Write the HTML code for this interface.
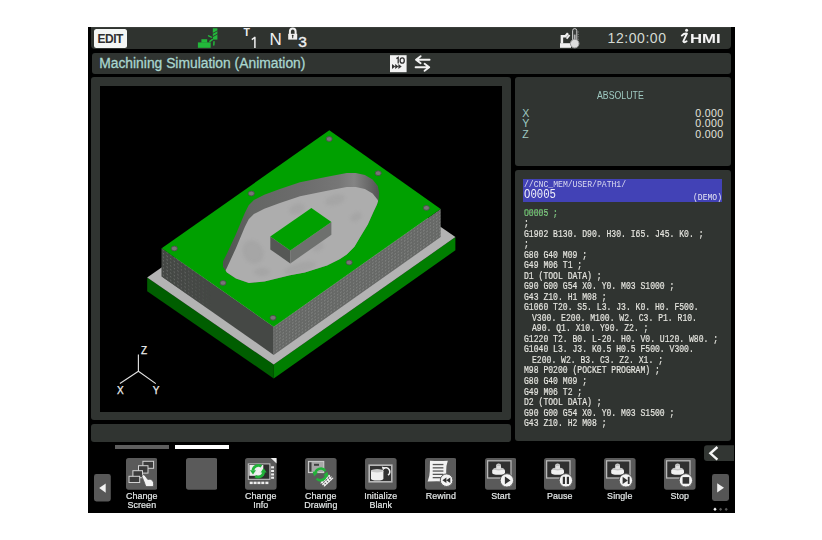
<!DOCTYPE html>
<html><head><meta charset="utf-8">
<style>
*{margin:0;padding:0;box-sizing:border-box}
html,body{width:822px;height:540px;background:#fff;overflow:hidden;font-family:"Liberation Sans",sans-serif}
.a{position:absolute}
#scr{left:88px;top:27px;width:647px;height:486px;background:#000}
.pnl{background:#303431;border-radius:3px}
.lbl{font-size:9.4px;line-height:9px;color:#e4e8e8;text-align:center;letter-spacing:0.1px;transform:scaleX(0.95);transform-origin:50% 0;-webkit-text-stroke:0.2px #e4e8e8}
.mono{font-family:"Liberation Mono",monospace}
</style></head><body>
<div class="a" id="scr"></div>
<!-- header -->
<div class="a pnl" style="left:91px;top:27px;width:640px;height:22.4px;border-radius:0 0 4px 4px;background:#2f332f;border-top:1px solid #3a3e3a"></div>
<div class="a" style="left:94.2px;top:28.5px;width:32.6px;height:19.4px;background:#f4f6f4;border-radius:2.5px"></div>
<div class="a" style="left:97.6px;top:31.8px;font-size:12px;font-weight:bold;color:#303030;letter-spacing:-0.5px;line-height:14px">EDIT</div>


<!-- green tool icon -->
<svg class="a" style="left:196px;top:27px" width="24" height="22" viewBox="196 27 24 22">
<rect x="197.9" y="42.4" width="12.8" height="5.4" fill="#22b83a"/>
<rect x="201.4" y="39.2" width="5.8" height="3.4" fill="#22b83a"/>
<rect x="212.8" y="28.3" width="4.6" height="11.3" fill="#22b83a"/>
<path d="M212.5 33.5 L217.8 30.6 M212.5 36.8 L217.8 33.9" stroke="#303431" stroke-width="0.9"/>
<path d="M208.6 35.9 L211.3 37.1 M209.9 41.4 L212.3 39.7 M214 41.8 L213.8 45" stroke="#22b83a" stroke-width="1.5" stroke-linecap="round"/>
</svg>
<div class="a" style="left:243.6px;top:27.2px;font-size:10.5px;font-weight:bold;color:#f0f0f0;line-height:11px">T</div>
<svg class="a" style="left:250px;top:36px" width="8" height="13" viewBox="250 36 8 13"><path d="M251.8 39.6 L254.9 37.4 V47.9" fill="none" stroke="#f0f0f0" stroke-width="1.5" stroke-linejoin="round"/></svg>
<div class="a" style="left:269.4px;top:30.6px;font-size:17px;color:#f0f0f0;line-height:18px">N</div>
<svg class="a" style="left:287px;top:27px" width="12" height="14" viewBox="287 27 12 14">
<path d="M289.9 34 V31.4 A2.85 2.85 0 0 1 295.6 31.4 V34" fill="none" stroke="#f0f0f0" stroke-width="2"/>
<rect x="288.2" y="33.8" width="9" height="5.8" fill="#f0f0f0"/>
<circle cx="292.7" cy="35.6" r="0.9" fill="#303431"/><rect x="292.2" y="35.6" width="1" height="2.6" fill="#303431"/>
</svg>
<div class="a" style="left:298.2px;top:33.1px;font-size:15.5px;color:#f0f0f0;line-height:17px;-webkit-text-stroke:0.4px #f0f0f0">3</div>
<!-- robot thermometer -->
<svg class="a" style="left:558px;top:27px" width="24" height="22" viewBox="558 27 24 22">
<path d="M561.9 43.6 V36.2 H565.4 L568 33.2" fill="none" stroke="#f0f0f0" stroke-width="2.5" stroke-linejoin="miter"/>
<path d="M566.6 38.6 L569.6 35" stroke="#f0f0f0" stroke-width="1.9"/>
<rect x="560" y="43.2" width="11" height="4.6" fill="#f0f0f0"/>
<rect x="572.6" y="28.6" width="4.2" height="13.6" rx="2.1" fill="#3a3d3b" stroke="#cfcfcf" stroke-width="1"/>
<rect x="573.8" y="34.6" width="1.8" height="7" fill="#b3b3b3"/>
<circle cx="574.7" cy="43.6" r="4.3" fill="#dedede" stroke="#9a9a9a" stroke-width="1"/>
<path d="M577.6 32 H578.8 M577.6 34.4 H578.8 M577.6 36.8 H578.8 M577.6 39.2 H578.8" stroke="#9a9a9a" stroke-width="0.8"/>
</svg>
<div class="a" style="left:607.6px;top:29.6px;font-size:14px;color:#d4dbd4;letter-spacing:0.55px;line-height:16px">12:00:00</div>
<svg class="a" style="left:678px;top:27px" width="14" height="20" viewBox="678 27 14 20">
<circle cx="686.6" cy="30.2" r="1.5" fill="#f4f4f4"/>
<path d="M681.8 35.6 Q684 33.2 686.9 33.6 L683.3 41.4 Q684 43.2 686.6 41.3" fill="none" stroke="#f4f4f4" stroke-width="1.9" stroke-linejoin="round" stroke-linecap="round"/>
</svg>
<div class="a" style="left:689.6px;top:32.3px;font-size:12.2px;font-weight:bold;color:#f4f4f4;line-height:14px;transform:scaleX(1.37);transform-origin:0 0">HMI</div>


<!-- title bar -->
<div class="a pnl" style="left:92px;top:53px;width:639px;height:20.7px"></div>
<div class="a" style="left:99.2px;top:54.6px;font-size:13.85px;color:#a9d6cf;line-height:16px;-webkit-text-stroke:0.3px #a9d6cf">Machining Simulation (Animation)</div>
<!-- title icons -->
<svg class="a" style="left:388px;top:53px" width="46" height="21" viewBox="388 53 46 21">
<rect x="390" y="55.2" width="16.6" height="17" fill="#f2f2f2"/>
<path d="M396.4 58.6 L398.2 57.4 V63.6" fill="none" stroke="#333" stroke-width="1.3"/><ellipse cx="402.2" cy="60.5" rx="2.1" ry="2.7" fill="none" stroke="#333" stroke-width="1.3"/>
<path d="M392 64 L395.3 66.5 L392 69 Z M395.2 64 L398.5 66.5 L395.2 69 Z M398.4 64 L401.7 66.5 L398.4 69 Z" fill="#333"/>
<path d="M416.5 59.7 H429.6 M420.6 56.2 L416 59.7 L420.6 63.2" fill="none" stroke="#f2f2f2" stroke-width="1.9" stroke-linecap="round" stroke-linejoin="round"/>
<path d="M415.6 67.3 H428.8 M424.6 63.8 L429.2 67.3 L424.6 70.8" fill="none" stroke="#f2f2f2" stroke-width="1.9" stroke-linecap="round" stroke-linejoin="round"/>
</svg>

<!-- graphics panel -->
<div class="a pnl" style="left:91px;top:77px;width:420px;height:343px"></div>
<div class="a" style="left:100px;top:86px;width:402px;height:326px;background:#000"></div>

<svg class="a" style="left:100px;top:86px" width="402" height="326" viewBox="100 86 402 326">
<defs>
<clipPath id="pk"><polygon points="235.9,234.3 244.8,213.0 248.7,205.2 253.9,200.0 264.3,194.8 279.9,189.0 300.0,182.3 325.9,176.9 346.7,173.0 355.8,173.0 364.9,174.9 372.6,179.5 377.8,186.0 379.1,192.4 378.6,199.4 377.0,204.4 373.3,212.2 367.8,224.4 361.1,235.6 354.4,246.7 346.7,254.4 340.0,258.9 327.0,265.4 304.8,272.4 290.0,275.3 264.5,281.6 248.9,282.9 235.9,278.4 226.9,272.5 223.0,266.7 223.0,261.5 226.9,253.7"/></clipPath>
<pattern id="dotR" width="3.2" height="3.2" patternUnits="userSpaceOnUse" patternTransform="skewY(-35.2)"><rect width="3.2" height="3.2" fill="#666866"/><rect x="1" y="1" width="1.1" height="1.1" fill="#8e908e"/></pattern>
<pattern id="dotL" width="3.6" height="3.6" patternUnits="userSpaceOnUse" patternTransform="skewY(35.2)"><rect width="3.6" height="3.6" fill="#454845"/><rect x="1" y="1" width="1.1" height="1.1" fill="#7a7c7a"/></pattern>
<linearGradient id="wall" x1="0" y1="0" x2="1" y2="0"><stop offset="0" stop-color="#505250"/><stop offset="0.18" stop-color="#646664"/><stop offset="0.5" stop-color="#6c6c6c"/><stop offset="0.74" stop-color="#767676"/><stop offset="0.84" stop-color="#848484"/><stop offset="0.93" stop-color="#6a6a6a"/><stop offset="1" stop-color="#545454"/></linearGradient>
<linearGradient id="fg" x1="161" y1="0" x2="274" y2="0" gradientUnits="userSpaceOnUse"><stop offset="0" stop-color="#fff"/><stop offset="0.2" stop-color="#fff" stop-opacity="0.7"/><stop offset="0.45" stop-color="#fff" stop-opacity="0"/></linearGradient><mask id="fadeL"><rect x="100" y="86" width="402" height="326" fill="url(#fg)"/></mask>
<filter id="bl" x="-50%" y="-50%" width="200%" height="200%"><feGaussianBlur stdDeviation="1.5"/></filter>
</defs>
<!-- base -->
<polygon points="147.2,277.6 273.7,364.6 273.7,378.4 147.2,291.2" fill="#005e00"/>
<polygon points="273.7,364.6 455.4,237.1 455.4,250.3 273.7,378.4" fill="#007e00"/>
<polygon points="147.2,277.6 328.9,150.1 455.4,237.1 273.7,364.6" fill="#b3b3b3"/>
<!-- block sides -->
<polygon points="161.7,248.3 273.7,326.7 273.7,354.9 161.7,276.5" fill="#454845"/><polygon points="161.7,248.3 273.7,326.7 273.7,354.9 161.7,276.5" fill="url(#dotL)" mask="url(#fadeL)"/>
<polygon points="273.7,326.7 440.7,208.9 440.7,237.1 273.7,354.9" fill="url(#dotR)"/>
<!-- block top -->
<polygon points="161.7,248.3 329.3,130.3 440.7,208.9 273.7,326.7" fill="#00a000"/>
<!-- pocket -->
<polygon points="235.9,234.3 244.8,213.0 248.7,205.2 253.9,200.0 264.3,194.8 279.9,189.0 300.0,182.3 325.9,176.9 346.7,173.0 355.8,173.0 364.9,174.9 372.6,179.5 377.8,186.0 379.1,192.4 378.6,199.4 377.0,204.4 373.3,212.2 367.8,224.4 361.1,235.6 354.4,246.7 346.7,254.4 340.0,258.9 327.0,265.4 304.8,272.4 290.0,275.3 264.5,281.6 248.9,282.9 235.9,278.4 226.9,272.5 223.0,266.7 223.0,261.5 226.9,253.7" fill="url(#wall)"/>
<g clip-path="url(#pk)">
<polygon points="235.9,248.3 244.8,227.0 248.7,219.2 253.9,214.0 264.3,208.8 279.9,203.0 300.0,196.3 325.9,190.9 346.7,187.0 355.8,187.0 364.9,188.9 372.6,193.5 377.8,200.0 379.1,206.4 378.6,213.4 377.0,218.4 373.3,226.2 367.8,238.4 361.1,249.6 354.4,260.7 346.7,268.4 340.0,272.9 327.0,279.4 304.8,286.4 290.0,289.3 264.5,295.6 248.9,296.9 235.9,292.4 226.9,286.5 223.0,280.7 223.0,275.5 226.9,267.7" fill="#adadad"/>
<ellipse cx="253" cy="252" rx="10" ry="12" transform="rotate(-30 253 252)" fill="#9a9a9a" opacity="0.35" filter="url(#bl)"/><ellipse cx="297" cy="209" rx="8" ry="5" transform="rotate(-20 297 209)" fill="#9a9a9a" opacity="0.35" filter="url(#bl)"/><ellipse cx="335" cy="200" rx="10" ry="5" transform="rotate(-15 335 200)" fill="#9a9a9a" opacity="0.35" filter="url(#bl)"/><ellipse cx="356" cy="217" rx="6" ry="4" transform="rotate(-30 356 217)" fill="#9a9a9a" opacity="0.35" filter="url(#bl)"/><ellipse cx="300" cy="268" rx="16" ry="5" transform="rotate(-15 300 268)" fill="#9a9a9a" opacity="0.35" filter="url(#bl)"/><ellipse cx="262" cy="272" rx="8" ry="4" transform="rotate(0 262 272)" fill="#9a9a9a" opacity="0.35" filter="url(#bl)"/><ellipse cx="318" cy="247" rx="6" ry="4" transform="rotate(-30 318 247)" fill="#9a9a9a" opacity="0.35" filter="url(#bl)"/></g>
<!-- island -->
<polygon points="270.3,236.6 290.3,250.6 290.3,263.4 270.3,249.4" fill="#555755"/>
<polygon points="290.3,250.6 331.4,222.0 331.4,234.8 290.3,263.4" fill="#6e706e"/>
<polygon points="270.3,236.6 311.4,208.0 331.4,222.0 290.3,250.6" fill="#00a000"/>
<!-- holes -->
<ellipse cx="329.2" cy="139" rx="3" ry="2.4" fill="#767676" stroke="#4a4a4a" stroke-width="0.8"/><ellipse cx="251.3" cy="193.5" rx="3" ry="2.4" fill="#767676" stroke="#4a4a4a" stroke-width="0.8"/><ellipse cx="378.2" cy="173.2" rx="3" ry="2.4" fill="#767676" stroke="#4a4a4a" stroke-width="0.8"/><ellipse cx="426.4" cy="207.9" rx="3" ry="2.4" fill="#767676" stroke="#4a4a4a" stroke-width="0.8"/><ellipse cx="174.3" cy="248.5" rx="3" ry="2.4" fill="#767676" stroke="#4a4a4a" stroke-width="0.8"/><ellipse cx="349.2" cy="262.5" rx="3" ry="2.4" fill="#767676" stroke="#4a4a4a" stroke-width="0.8"/><ellipse cx="223" cy="282.9" rx="3" ry="2.4" fill="#767676" stroke="#4a4a4a" stroke-width="0.8"/><ellipse cx="273" cy="317.8" rx="3" ry="2.4" fill="#767676" stroke="#4a4a4a" stroke-width="0.8"/>
<!-- axes -->
<path d="M138.4 371.3 V354.4 M138.4 371.3 L119.9 383.6 M138.4 371.3 L155.8 383.6" stroke="#e0e0e0" stroke-width="1.15" fill="none"/>
<text x="141" y="353.5" font-family="Liberation Sans" font-size="10" fill="#f0f0f0" stroke="#f0f0f0" stroke-width="0.25">Z</text>
<text x="117" y="394" font-family="Liberation Sans" font-size="10" fill="#f0f0f0" stroke="#f0f0f0" stroke-width="0.25">X</text>
<text x="152.8" y="394" font-family="Liberation Sans" font-size="10" fill="#f0f0f0" stroke="#f0f0f0" stroke-width="0.25">Y</text>
</svg>

<!-- scroll bar panel -->
<div class="a pnl" style="left:91px;top:424px;width:420px;height:18px"></div>
<div class="a" style="left:114.7px;top:445.3px;width:54.5px;height:4.1px;background:#5e5e5e"></div>
<div class="a" style="left:174.5px;top:445.3px;width:54.5px;height:4.1px;background:#fff"></div>

<!-- absolute panel -->
<div class="a pnl" style="left:515px;top:77px;width:216px;height:89px"></div>
<!-- program panel -->
<div class="a pnl" style="left:515px;top:170px;width:216px;height:271px"></div>
<div class="a" style="left:523.4px;top:178.8px;width:198.7px;height:23.2px;background:#4242b6"></div>


<!-- soft keys -->
<svg class="a" style="left:125.8px;top:458.1px" width="31.6" height="31.7" viewBox="0 0 31.6 31.7"><rect width="31.6" height="31.7" rx="2.6" fill="#5a5a5a"/><rect x="16.9" y="3.3" width="10.7" height="7" fill="#3c3c3c" stroke="#d4d4d4" stroke-width="1"/><rect x="12.5" y="7.7" width="9.5" height="7.4" fill="#3c3c3c" stroke="#d4d4d4" stroke-width="1"/><rect x="6.9" y="12.7" width="9.6" height="7" fill="#3c3c3c" stroke="#d4d4d4" stroke-width="1"/><rect x="3" y="18.3" width="10.7" height="6.2" fill="#3c3c3c" stroke="#d4d4d4" stroke-width="1"/><path d="M16.2 17.4 Q17.4 16 18.8 17.4 L21.8 21.4 Q24.4 20.6 26.2 22.2 Q28 24 27.6 26.8 L27.2 28.6 H20 Q19 26.4 18.6 25 L16 18.6 Z" fill="#f4f4f4" stroke="#5a5a5a" stroke-width="0.8"/></svg>
<div class="a lbl" style="left:105.8px;top:491.0px;width:71.6px">Change<br>Screen</div>
<svg class="a" style="left:185.6px;top:458.1px" width="31.6" height="31.7" viewBox="0 0 31.6 31.7"><rect width="31.6" height="31.7" rx="2.6" fill="#5a5a5a"/></svg>
<svg class="a" style="left:245.4px;top:458.1px" width="31.6" height="31.7" viewBox="0 0 31.6 31.7"><rect width="31.6" height="31.7" rx="2.6" fill="#5a5a5a"/><path d="M25.8 0 H31.6 V5.6 Z" fill="#f0f0f0"/><rect x="3.3" y="5.9" width="21.6" height="15.4" fill="#2e2e2e" stroke="#c8c8c8" stroke-width="1"/><rect x="4.3" y="7" width="14" height="10.8" fill="#ececec"/><path d="M7.98 12.4 A5.4 5.4 0 0 1 16.4 8.4" fill="none" stroke="#22b33a" stroke-width="2.8"/><path d="M4.9 12.2 L11 12.2 L8 16.6 Z" fill="#22b33a"/><path d="M18.62 14.2 A5.4 5.4 0 0 1 10.2 18.2" fill="none" stroke="#22b33a" stroke-width="2.8"/><path d="M15.6 14.4 L21.7 14.4 L18.6 10 Z" fill="#22b33a"/><path d="M11.4 10.8 H15 L11.6 15.8 H15.2" fill="none" stroke="#f4f4f4" stroke-width="1.2"/><rect x="26.1" y="8.3" width="2.9" height="2.1" fill="#eeeeee"/><rect x="26.1" y="11.9" width="2.9" height="2.1" fill="#eeeeee"/><rect x="26.1" y="15.4" width="2.9" height="2.1" fill="#eeeeee"/><rect x="26.1" y="18.7" width="2.9" height="2.1" fill="#eeeeee"/><rect x="4.7" y="23.7" width="3" height="2.4" fill="#eeeeee"/><rect x="8.6" y="23.7" width="3" height="2.4" fill="#eeeeee"/><rect x="12.4" y="23.7" width="3" height="2.4" fill="#eeeeee"/><rect x="16.3" y="23.7" width="3" height="2.4" fill="#eeeeee"/><rect x="20.4" y="23.7" width="3" height="2.4" fill="#eeeeee"/></svg>
<div class="a lbl" style="left:225.4px;top:491.0px;width:71.6px">Change<br>Info</div>
<svg class="a" style="left:305.2px;top:458.1px" width="31.6" height="31.7" viewBox="0 0 31.6 31.7"><rect width="31.6" height="31.7" rx="2.6" fill="#5a5a5a"/>
<rect x="3.4" y="3.4" width="15.4" height="11.2" fill="#a8a8a8" stroke="#d0d0d0" stroke-width="1"/>
<rect x="4.3" y="4.3" width="2.2" height="9.4" fill="#3a3a3a"/>
<rect x="9" y="5.8" width="5" height="2" fill="#404040"/>
<g stroke="#f2f2f2" stroke-width="1.1" stroke-linecap="round">
<path d="M16 25.2 L24.6 17.4 M17.6 26.6 L26.2 18.8 M19.2 28 L27.8 20.2"/>
<path d="M16.6 23.4 L20 27.6 M18.8 21.4 L22.2 25.6 M21 19.4 L24.4 23.6 M23.2 17.4 L26.6 21.6"/>
</g>
<path d="M10.2 16.4 A5.6 5.6 0 0 1 20.4 13" fill="none" stroke="#22b33a" stroke-width="2.6"/><path d="M7.6 13.6 L12.8 14.6 L9.2 18.6 Z" fill="#22b33a"/>
<path d="M21 15.4 A5.6 5.6 0 0 1 11.6 20.6" fill="none" stroke="#22b33a" stroke-width="2.6"/><path d="M23.6 18.4 L18.4 17.2 L22.2 13.6 Z" fill="#22b33a"/>
</svg>
<div class="a lbl" style="left:285.2px;top:491.0px;width:71.6px">Change<br>Drawing</div>
<svg class="a" style="left:365.0px;top:458.1px" width="31.6" height="31.7" viewBox="0 0 31.6 31.7"><rect width="31.6" height="31.7" rx="2.6" fill="#5a5a5a"/><rect x="4.2" y="7.2" width="22.6" height="16.6" fill="#333333" stroke="#b8b8b8" stroke-width="1.6"/><path d="M6 13.2 Q6 11.2 12.2 11.2 Q18.4 11.2 18.4 13.2 V20.6 Q18.4 22.6 12.2 22.6 Q6 22.6 6 20.6 Z" fill="#f0f0f0"/><ellipse cx="12.2" cy="13" rx="6.2" ry="1.5" fill="#c8c8c8"/><path d="M18.6 10.4 A4 4 0 0 1 23 17.2" fill="none" stroke="#f0f0f0" stroke-width="1.6"/><path d="M16.8 8.6 L20.4 9.4 L18 12.6 Z" fill="#f0f0f0"/></svg>
<div class="a lbl" style="left:345.0px;top:491.0px;width:71.6px">Initialize<br>Blank</div>
<svg class="a" style="left:424.8px;top:458.1px" width="31.6" height="31.7" viewBox="0 0 31.6 31.7"><rect width="31.6" height="31.7" rx="2.6" fill="#5a5a5a"/><path d="M5 2.8 Q14 3.4 22.8 2.8 Q21 8 21.2 13 Q21.4 18 21 23.6 Q12 23 2.6 23.6 Q4.8 18 4.8 13 Q4.8 8 5 2.8 Z" fill="#f2f2f2"/><rect x="7.7" y="5.9" width="10.7" height="1.3" fill="#555"/><rect x="7.7" y="9.2" width="10.7" height="1.3" fill="#555"/><rect x="7.7" y="12.4" width="10.7" height="1.3" fill="#555"/><rect x="7.7" y="15.7" width="10.7" height="1.3" fill="#555"/><rect x="7.7" y="19.0" width="10.7" height="1.3" fill="#555"/><circle cx="21.6" cy="22.2" r="6.3" fill="#f4f4f4" stroke="#5a5a5a" stroke-width="1"/><path d="M17.4 22.2 L21.4 19.4 V25 Z M21.3 22.2 L25.3 19.4 V25 Z" fill="#333"/></svg>
<div class="a lbl" style="left:404.8px;top:491.0px;width:71.6px">Rewind</div>
<svg class="a" style="left:484.6px;top:458.1px" width="31.6" height="31.7" viewBox="0 0 31.6 31.7"><rect width="31.6" height="31.7" rx="2.6" fill="#5a5a5a"/><rect x="2.6" y="2.8" width="23.4" height="17.2" fill="#303030" stroke="#b8b8b8" stroke-width="1.3"/><path d="M7.2 12.6 Q7.2 10.4 13.6 10.4 Q20 10.4 20 12.6 V14.8 Q20 16.8 13.6 16.8 Q7.2 16.8 7.2 14.8 Z" fill="#f0f0f0"/><path d="M7.6 11.6 Q8.4 9.4 13.6 9.4 Q18.8 9.4 19.6 11.6 Q13.6 13.2 7.6 11.6 Z" fill="#c4c4c4"/><path d="M11.2 10.6 V7.4 Q11.2 5.6 13.6 5.6 Q16 5.6 16 7.4 V10.6 Q13.6 11.6 11.2 10.6 Z" fill="#e0e0e0"/><ellipse cx="13.6" cy="7.2" rx="2.2" ry="0.9" fill="#bdbdbd"/><circle cx="21.9" cy="22.4" r="6.7" fill="#f4f4f4" stroke="#5a5a5a" stroke-width="1"/><path d="M19.9 18.6 L25.6 22.4 L19.9 26.2 Z" fill="#333"/></svg>
<div class="a lbl" style="left:464.6px;top:491.0px;width:71.6px">Start</div>
<svg class="a" style="left:544.4px;top:458.1px" width="31.6" height="31.7" viewBox="0 0 31.6 31.7"><rect width="31.6" height="31.7" rx="2.6" fill="#5a5a5a"/><rect x="2.6" y="2.8" width="23.4" height="17.2" fill="#303030" stroke="#b8b8b8" stroke-width="1.3"/><path d="M7.2 12.6 Q7.2 10.4 13.6 10.4 Q20 10.4 20 12.6 V14.8 Q20 16.8 13.6 16.8 Q7.2 16.8 7.2 14.8 Z" fill="#f0f0f0"/><path d="M7.6 11.6 Q8.4 9.4 13.6 9.4 Q18.8 9.4 19.6 11.6 Q13.6 13.2 7.6 11.6 Z" fill="#c4c4c4"/><path d="M11.2 10.6 V7.4 Q11.2 5.6 13.6 5.6 Q16 5.6 16 7.4 V10.6 Q13.6 11.6 11.2 10.6 Z" fill="#e0e0e0"/><ellipse cx="13.6" cy="7.2" rx="2.2" ry="0.9" fill="#bdbdbd"/><circle cx="21.9" cy="22.4" r="6.7" fill="#f4f4f4" stroke="#5a5a5a" stroke-width="1"/><rect x="18.8" y="18.8" width="2.2" height="7.2" fill="#333"/><rect x="22.8" y="18.8" width="2.2" height="7.2" fill="#333"/></svg>
<div class="a lbl" style="left:524.4px;top:491.0px;width:71.6px">Pause</div>
<svg class="a" style="left:604.2px;top:458.1px" width="31.6" height="31.7" viewBox="0 0 31.6 31.7"><rect width="31.6" height="31.7" rx="2.6" fill="#5a5a5a"/><rect x="2.6" y="2.8" width="23.4" height="17.2" fill="#303030" stroke="#b8b8b8" stroke-width="1.3"/><path d="M7.2 12.6 Q7.2 10.4 13.6 10.4 Q20 10.4 20 12.6 V14.8 Q20 16.8 13.6 16.8 Q7.2 16.8 7.2 14.8 Z" fill="#f0f0f0"/><path d="M7.6 11.6 Q8.4 9.4 13.6 9.4 Q18.8 9.4 19.6 11.6 Q13.6 13.2 7.6 11.6 Z" fill="#c4c4c4"/><path d="M11.2 10.6 V7.4 Q11.2 5.6 13.6 5.6 Q16 5.6 16 7.4 V10.6 Q13.6 11.6 11.2 10.6 Z" fill="#e0e0e0"/><ellipse cx="13.6" cy="7.2" rx="2.2" ry="0.9" fill="#bdbdbd"/><circle cx="21.9" cy="22.4" r="6.7" fill="#f4f4f4" stroke="#5a5a5a" stroke-width="1"/><path d="M18.6 18.8 L23.8 22.4 L18.6 26 Z" fill="#333"/><rect x="23.8" y="18.8" width="1.8" height="7.2" fill="#333"/></svg>
<div class="a lbl" style="left:584.2px;top:491.0px;width:71.6px">Single</div>
<svg class="a" style="left:664.0px;top:458.1px" width="31.6" height="31.7" viewBox="0 0 31.6 31.7"><rect width="31.6" height="31.7" rx="2.6" fill="#5a5a5a"/><rect x="2.6" y="2.8" width="23.4" height="17.2" fill="#303030" stroke="#b8b8b8" stroke-width="1.3"/><path d="M7.2 12.6 Q7.2 10.4 13.6 10.4 Q20 10.4 20 12.6 V14.8 Q20 16.8 13.6 16.8 Q7.2 16.8 7.2 14.8 Z" fill="#f0f0f0"/><path d="M7.6 11.6 Q8.4 9.4 13.6 9.4 Q18.8 9.4 19.6 11.6 Q13.6 13.2 7.6 11.6 Z" fill="#c4c4c4"/><path d="M11.2 10.6 V7.4 Q11.2 5.6 13.6 5.6 Q16 5.6 16 7.4 V10.6 Q13.6 11.6 11.2 10.6 Z" fill="#e0e0e0"/><ellipse cx="13.6" cy="7.2" rx="2.2" ry="0.9" fill="#bdbdbd"/><circle cx="21.9" cy="22.4" r="6.7" fill="#f4f4f4" stroke="#5a5a5a" stroke-width="1"/><rect x="18.6" y="19.1" width="6.6" height="6.6" fill="#333"/></svg>
<div class="a lbl" style="left:644.0px;top:491.0px;width:71.6px">Stop</div>
<svg class="a" style="left:93.8px;top:474px" width="17" height="28" viewBox="0 0 17 28"><rect width="16.8" height="27.5" rx="2.4" fill="#585858"/><path d="M5.2 14 L11.7 9.4 V18.8 Z" fill="#f2f2f2"/></svg>
<svg class="a" style="left:712px;top:474px" width="17" height="27" viewBox="0 0 17 27"><rect width="17" height="27" rx="2.4" fill="#555"/><path d="M12 13.8 L5.2 9.2 V18.6 Z" fill="#f2f2f2"/></svg>
<svg class="a" style="left:703.8px;top:444.9px" width="30" height="17" viewBox="0 0 30 17"><path d="M3 0.3 H30 V16 H3 Q0 16 0 13 V3.3 Q0 0.3 3 0.3 Z" fill="#323633"/><path d="M13.4 2 L6.4 8.3 L13.4 14.6" fill="none" stroke="#f6f6f6" stroke-width="2.4"/></svg>
<svg class="a" style="left:712px;top:506px" width="18" height="7" viewBox="712 506 18 7"><path d="M715 507.6 L716.7 509.3 L715 511 L713.3 509.3 Z" fill="#f4f4f4"/><path d="M720.6 507.7 L722.2 509.3 L720.6 510.9 L719 509.3 Z" fill="#5a5a5a"/><path d="M726.2 507.7 L727.8 509.3 L726.2 510.9 L724.6 509.3 Z" fill="#5a5a5a"/></svg>

<!-- absolute texts -->
<div class="a" style="left:597.2px;top:90.4px;font-size:10.2px;color:#9fcac2;line-height:12px;transform:scaleX(0.86);transform-origin:0 0">ABSOLUTE</div>
<div class="a" style="left:522.2px;top:107.8px;font-size:10.6px;color:#9fcac2;line-height:10.5px">X<br>Y<br>Z</div>
<div class="a" style="left:660px;top:107.8px;width:63.5px;text-align:right;font-size:10.6px;color:#e2e2dc;line-height:10.5px;letter-spacing:0.35px">0.000<br>0.000<br>0.000</div>
<!-- program header -->
<div class="a mono" id="phdr" style="left:524px;top:179.7px;font-size:9px;color:#dcdcf0;line-height:10px;transform:scaleX(0.9);transform-origin:0 0">//CNC_MEM/USER/PATH1/</div>
<div class="a mono" style="left:523.6px;top:188.2px;font-size:13.5px;color:#f0f0f8;line-height:14px;transform:scaleX(0.79);transform-origin:0 0">O0005</div>
<div class="a mono" style="left:693.4px;top:191.8px;font-size:9.6px;color:#e8e8f4;line-height:11px;transform:scaleX(0.84);transform-origin:0 0">(DEMO)</div>
<pre class="a mono" id="prog" style="left:523.6px;top:207.5px;font-size:11px;color:#e6e6e0;line-height:10.53px;transform:scaleX(0.735);-webkit-text-stroke:0.2px #e6e6e0;transform-origin:0 0"><span style="color:#35b83c">O0005 ;</span>
;
G1902 B130. D90. H30. I65. J45. K0. ;
;
G80 G40 M09 ;
G49 M06 T1 ;
D1 (TOOL DATA) ;
G90 G00 G54 X0. Y0. M03 S1000 ;
G43 Z10. H1 M08 ;
G1060 T20. S5. L3. J3. K0. H0. F500.
<span style="padding-left:10.9px">V300. E200. M100. W2. C3. P1. R10.</span>
<span style="padding-left:10.9px">A90. Q1. X10. Y90. Z2. ;</span>
G1220 T2. B0. L-20. H0. V0. U120. W80. ;
G1040 L3. J3. K0.5 H0.5 F500. V300.
<span style="padding-left:10.9px">E200. W2. B3. C3. Z2. X1. ;</span>
M98 P0200 (POCKET PROGRAM) ;
G80 G40 M09 ;
G49 M06 T2 ;
D2 (TOOL DATA) ;
G90 G00 G54 X0. Y0. M03 S1500 ;
G43 Z10. H2 M08 ;</pre>

</body></html>
